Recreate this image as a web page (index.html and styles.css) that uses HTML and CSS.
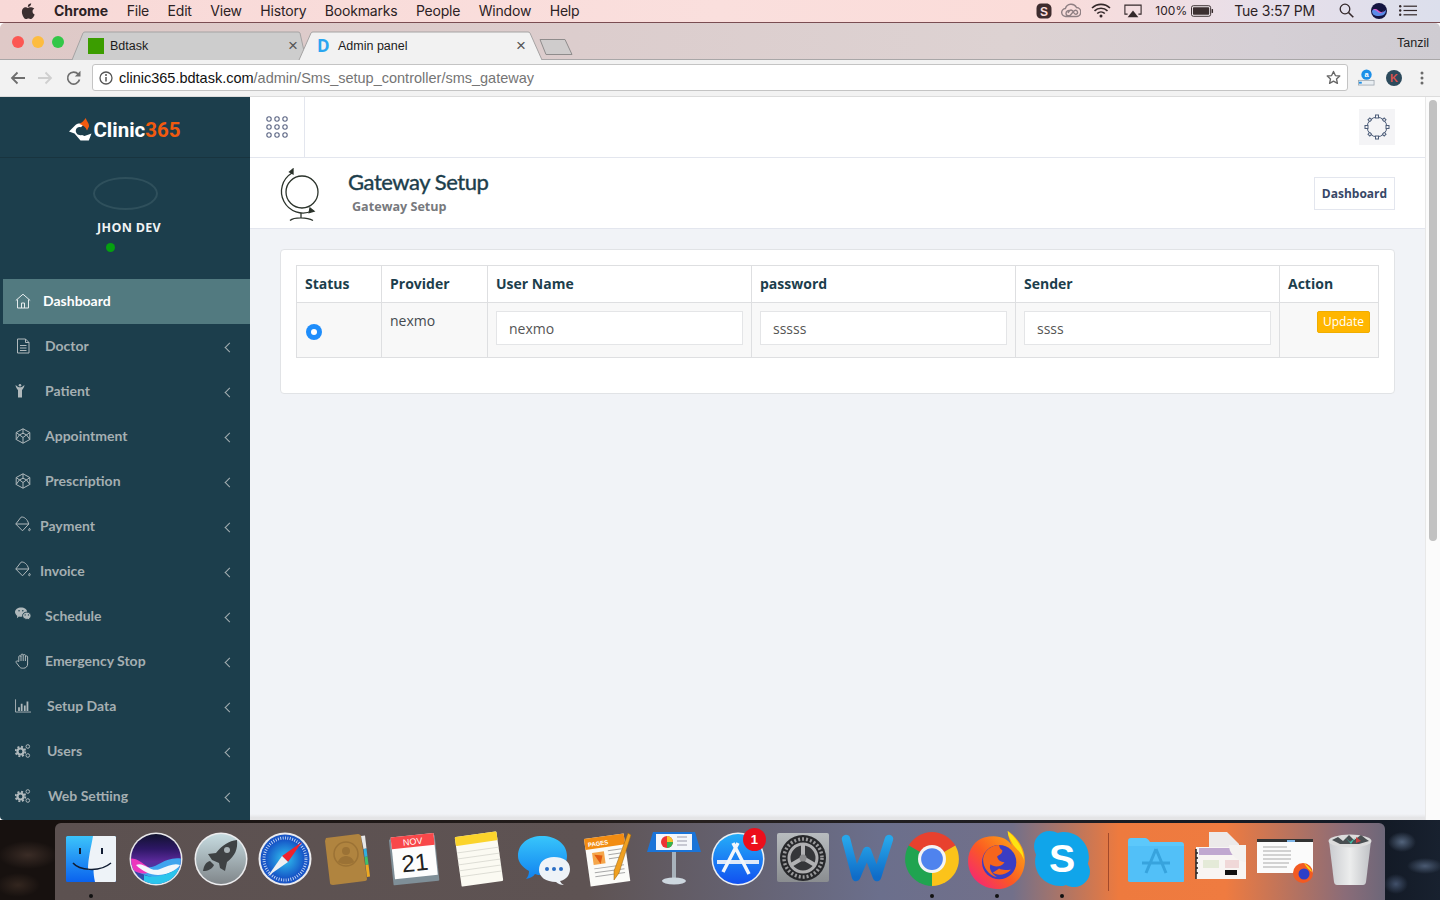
FILE: index.html
```html
<!DOCTYPE html>
<html lang="en">
<head>
<meta charset="utf-8">
<title>Admin panel</title>
<link rel="stylesheet" href="styles.css">
</head>
<body>
<div class="desktop">
  <header class="menubar">
    <svg class="apple" viewBox="0 0 16 18" width="14" height="16"><path d="M11.6 0c.1 1.2-.3 2.200-1 3-.7.8-1.700 1.400-2.800 1.300-.1-1.100.4-2.200 1-2.900C9.500.6 10.700.1 11.600 0zM15.200 6.200c-1.400.9-2 2-2 3.400 0 1.600.9 2.800 2.400 3.500-.4 1.100-.9 2.100-1.600 3.100-.8 1.100-1.600 2-2.700 2-1.100 0-1.500-.7-2.800-.7-1.300 0-1.800.7-2.800.7-1.100 0-1.900-1-2.700-2.200C1.800 14.200 1 11.900 1 9.800c0-3.200 2.100-5 4.100-5 1.100 0 2 .7 2.700.7.700 0 1.700-.8 3-.8 1.100 0 3.100.3 4.400 1.500z" fill="#3b2f30"/></svg>
    <nav class="menus">
      <span class="menu menu-app">Chrome</span>
      <span class="menu">File</span>
      <span class="menu">Edit</span>
      <span class="menu">View</span>
      <span class="menu">History</span>
      <span class="menu">Bookmarks</span>
      <span class="menu">People</span>
      <span class="menu">Window</span>
      <span class="menu">Help</span>
    </nav>
    <div class="status">
      <svg class="st-skype" viewBox="0 0 16 16" width="16" height="16"><path d="M5 .5h5.500C13.500.5 15.500 3 15.500 5.500v5.500c0 2.600-2.200 4.500-4.700 4.500H5C2.500 15.500.5 13.500.5 11V5C.5 2.500 2.500.5 5 .5z" fill="#3e2c2e"/><text x="8" y="12.500" class="st-skype-s">S</text></svg>
      <svg class="st-cc" viewBox="0 0 20 15" width="20" height="15"><path d="M5 13.500a4 4 0 0 1-.6-8A6 6 0 0 1 15.500 4.500 4.500 4.500 0 0 1 15 13.500zM7 10c2-4 4-4 6 0 1.500 2.500 4 1 3.500-1-.5-2-2.500-2.500-4-.5l-3 3.500c-2 1.500-4.500.5-4.500-1.500S7.500 6.500 9.500 8" fill="none" stroke="#8f7f83" stroke-width="1.400"/></svg>
      <svg class="st-wifi" viewBox="0 0 20 15" width="20" height="15"><g fill="none" stroke="#33282a" stroke-width="1.600"><path d="M1 5a13 13 0 0 1 18 0"/><path d="M3.500 7.800a9.500 9.500 0 0 1 13 0"/><path d="M6.200 10.500a5.500 5.500 0 0 1 7.600 0"/></g><circle cx="10" cy="13" r="1.500" fill="#33282a"/></svg>
      <svg class="st-air" viewBox="0 0 20 15" width="18" height="14"><path d="M4 11H1V1h18v10h-3" fill="none" stroke="#33282a" stroke-width="1.200"/><path d="M10 7l6 7.500H4z" fill="#33282a"/></svg>
      <span class="st-batt-text">100%</span>
      <svg class="st-batt" viewBox="0 0 24 12" width="23" height="12"><rect x=".5" y=".5" width="20" height="11" rx="2" fill="#fff" fill-opacity=".4" stroke="#33282a"/><rect x="2" y="2" width="17" height="8" rx=".8" fill="#3b2f30"/><rect x="21.500" y="4" width="1.500" height="4" fill="#33282a"/></svg>
      <span class="st-clock">Tue 3:57 PM</span>
      <svg class="st-search" viewBox="0 0 15 15" width="15" height="15"><circle cx="6" cy="6" r="4.800" fill="none" stroke="#33282a" stroke-width="1.300"/><path d="M9.500 9.500l4.800 4.800" stroke="#33282a" stroke-width="1.600"/></svg>
      <svg class="st-siri" viewBox="0 0 16 16" width="16" height="16"><circle cx="8" cy="8" r="8" fill="#141440"/><path d="M1 8c2-3 4-2 6 0s5 2 8-1c0 3-2 6-7 6S1 11 1 8z" fill="#5b8be8"/><path d="M2 7c2-2 4-1 6 1s4 1 5-1c-1 3-4 4-6 2S4 7 2 7z" fill="#e25ac8"/></svg>
      <svg class="st-list" viewBox="0 0 18 11" width="18" height="11"><g fill="#33282a"><circle cx="1.200" cy="1.200" r="1.200"/><circle cx="1.200" cy="5.500" r="1.200"/><circle cx="1.200" cy="9.800" r="1.200"/><rect x="4.500" y=".6" width="13.500" height="1.200"/><rect x="4.500" y="4.900" width="13.500" height="1.200"/><rect x="4.500" y="9.200" width="13.500" height="1.200"/></g></svg>
    </div>
  </header>

  <div class="window">
    <div class="tabstrip">
      <div class="lights"><i class="light light-r"></i><i class="light light-y"></i><i class="light light-g"></i></div>
      <div class="tab tab-back">
        <svg class="tabshape" viewBox="0 0 234 28" preserveAspectRatio="none"><path d="M0 28 L11 1 Q11.500 0 13 0 H226 Q227.500 0 228 1 L234 28" fill="#cdcdcd" stroke="#a5a3a3"/></svg>
        <i class="fav-green"></i>
        <span class="tab-title">Bdtask</span>
        <span class="tab-x">×</span>
      </div>
      <div class="tab tab-front">
        <svg class="tabshape" viewBox="0 0 243 28" preserveAspectRatio="none"><path d="M0 28 L12 1 Q12.500 0 14 0 H229 Q230.500 0 231 1 L243 28" fill="#f2f2f2" stroke="#a5a3a3"/></svg>
        <span class="fav-d">D</span>
        <span class="tab-title">Admin panel</span>
        <span class="tab-x">×</span>
      </div>
      <svg class="newtab" viewBox="0 0 34 18" width="34" height="18"><path d="M1 1.500H26L33 16.500H7z" fill="#cfcccc" stroke="#8f8c8c" stroke-linejoin="round"/></svg>
      <span class="profile">Tanzil</span>
    </div>

    <div class="toolbar">
      <svg class="tb-back" viewBox="0 0 16 14" width="16" height="14"><path d="M15 7H2M7.500 1.500L2 7l5.500 5.500" fill="none" stroke="#6e6e6e" stroke-width="1.800"/></svg>
      <svg class="tb-fwd" viewBox="0 0 16 14" width="16" height="14"><path d="M1 7h13M8.500 1.500L14 7l-5.500 5.500" fill="none" stroke="#cfcfcf" stroke-width="1.800"/></svg>
      <svg class="tb-reload" viewBox="0 0 16 16" width="16" height="16"><path d="M13.500 9.500a6 6 0 1 1-1.200-5.300" fill="none" stroke="#6e6e6e" stroke-width="1.700"/><path d="M14.500 .8V6.500H8.800z" fill="#6e6e6e"/></svg>
      <div class="omnibox">
        <svg class="info" viewBox="0 0 14 14" width="14" height="14"><circle cx="7" cy="7" r="6" fill="none" stroke="#555" stroke-width="1.300"/><path d="M7 6v4.500" stroke="#555" stroke-width="1.500"/><circle cx="7" cy="3.900" r="1" fill="#555"/></svg>
        <span class="url"><b class="url-host">clinic365.bdtask.com</b>/admin/Sms_setup_controller/sms_gateway</span>
        <svg class="star" viewBox="0 0 16 16" width="15" height="15"><path d="M8 1.500l2 4.400 4.700.5-3.500 3.200 1 4.700L8 11.900l-4.200 2.400 1-4.700L1.300 6.400 6 5.900z" fill="none" stroke="#666" stroke-width="1.400" stroke-linejoin="round"/></svg>
      </div>
      <svg class="ext-a" viewBox="0 0 18 18" width="17" height="17"><circle cx="9" cy="6" r="5.500" fill="#1b8fe8"/><text x="9" y="8.600" class="ext-a-t">a</text><rect x=".5" y="12" width="16.500" height="5" fill="#e9eef2" stroke="#9aa3ab" stroke-width=".8"/><rect x="1" y="13.500" width="3" height="2" fill="#1b8fe8"/></svg>
      <svg class="ext-k" viewBox="0 0 16 16" width="16" height="16"><circle cx="8" cy="8" r="8" fill="#2c4a5c"/><text x="8" y="12" class="ext-k-t">K</text></svg>
      <svg class="kebab" viewBox="0 0 4 14" width="4" height="14"><g fill="#6a6a6a"><circle cx="2" cy="2" r="1.500"/><circle cx="2" cy="7" r="1.500"/><circle cx="2" cy="12" r="1.500"/></g></svg>
    </div>

    <div class="app">
      <aside class="sidebar">
        <div class="logo">
          <svg class="logo-mark" viewBox="0 0 24 23" width="24" height="23"><path d="M0 13.500L6.500 7C9 5.200 12 5.200 14.500 6.500L12 9.300C9.500 8.300 7 10 6.800 12.500 6.600 15.500 9.500 18 13 17L15.500 18 22.500 15.500 19.800 22.500 11.500 22.500 5.500 15.500z" fill="#fff"/><path d="M10.500 6C13 4.500 15 2.500 16.800 0c.6 3 3.700 5.200 3.200 8.500L18 12.500C17 9.500 14 7 10.500 6z" fill="#f15a0f"/></svg>
          <span class="logo-text">Clinic<em class="logo-num">365</em></span>
        </div>
        <div class="user">
          <i class="avatar"></i>
          <span class="user-name">JHON DEV</span>
          <i class="user-dot"></i>
        </div>
        <nav class="nav">
          <a class="nav-item is-active">
            <svg class="nav-icon" viewBox="0 0 16 16"><path d="M.8 7.500L8 1.200l7.200 6.300M2.500 6.500V15h11V6.500M6.500 15v-5h3v5" class="ico-line"/></svg>
            <span class="nav-label lab-43">Dashboard</span>
          </a>
          <a class="nav-item">
            <svg class="nav-icon" viewBox="0 0 16 16"><path d="M2.500 1h8l3.500 3.500V15h-11.500zM10.500 1v3.500H14M5 7.500h6.500M5 10h6.500M5 12.500h6.500" class="ico-line"/></svg>
            <span class="nav-label lab-45">Doctor</span><i class="chev"></i>
          </a>
          <a class="nav-item">
            <svg class="nav-icon" viewBox="0 0 16 16"><path d="M.5 2c1.500 1 2.500 2 3.500 2.200h2C7 4 8 3 9.500 2c-.3 2.500-1.500 4-2.500 5v7.500H3V7C2 6 .8 4.500.5 2z" class="ico-fill"/><circle cx="5" cy="2.200" r="1.300" class="ico-fill"/></svg>
            <span class="nav-label lab-45">Patient</span><i class="chev"></i>
          </a>
          <a class="nav-item">
            <svg class="nav-icon" viewBox="0 0 16 16"><path d="M8 .8l6.800 3.700v7L8 15.200 1.200 11.500v-7zM8 .8v4.500M1.200 4.500L8 9.500l6.800-5M8 9.500v5.700M4.500 6.800L1.200 11.500M11.500 6.800l3.300 4.700M4.500 6.800L8 5.300l3.500 1.500" class="ico-line"/></svg>
            <span class="nav-label lab-45">Appointment</span><i class="chev"></i>
          </a>
          <a class="nav-item">
            <svg class="nav-icon" viewBox="0 0 16 16"><path d="M8 .8l6.800 3.700v7L8 15.200 1.200 11.500v-7zM8 .8v4.500M1.200 4.500L8 9.500l6.800-5M8 9.500v5.700M4.500 6.800L1.200 11.500M11.500 6.800l3.300 4.700M4.500 6.800L8 5.300l3.500 1.500" class="ico-line"/></svg>
            <span class="nav-label lab-45">Prescription</span><i class="chev"></i>
          </a>
          <a class="nav-item">
            <svg class="nav-icon nudge-up" viewBox="0 0 16 16"><path d="M.8 8L6 1.200c2-.8 5.500 1 7 4.800l.8 2L7.500 14.800zM.8 8H13.800M14.500 12.300c.8 1 1 1.500.4 2.200-.5.4-1.200.2-1.300-.4 0-.5.5-1 .9-1.800z" class="ico-line"/></svg>
            <span class="nav-label lab-40">Payment</span><i class="chev"></i>
          </a>
          <a class="nav-item">
            <svg class="nav-icon nudge-up" viewBox="0 0 16 16"><path d="M.8 8L6 1.200c2-.8 5.500 1 7 4.800l.8 2L7.500 14.800zM.8 8H13.800M14.500 12.300c.8 1 1 1.500.4 2.200-.5.4-1.200.2-1.300-.4 0-.5.5-1 .9-1.800z" class="ico-line"/></svg>
            <span class="nav-label lab-40">Invoice</span><i class="chev"></i>
          </a>
          <a class="nav-item">
            <svg class="nav-icon nudge-up" viewBox="0 0 17 15"><path d="M6.500 .5c3.500 0 6.500 2.200 6.500 5 0 2.800-3 5-6.500 5-.8 0-1.600-.1-2.300-.3L2 12l.4-2.500C1 8.500 0 7.100 0 5.500c0-2.800 3-5 6.500-5z" class="ico-fill"/><path d="M12.500 5.500c2.500 0 4.500 1.700 4.500 3.800 0 1.200-.6 2.200-1.600 2.900l.3 2-1.900-1.100c-.4.100-.9.100-1.300.1-2.500 0-4.500-1.700-4.500-3.900s2-3.800 4.500-3.800z" class="ico-fill ico-gap"/><circle cx="4.300" cy="4" r=".8" class="ico-eye"/><circle cx="8.300" cy="4" r=".8" class="ico-eye"/><circle cx="10.800" cy="8.500" r=".7" class="ico-eye"/><circle cx="14.300" cy="8.500" r=".7" class="ico-eye"/></svg>
            <span class="nav-label lab-45">Schedule</span><i class="chev"></i>
          </a>
          <a class="nav-item">
            <svg class="nav-icon" viewBox="0 0 16 16"><path d="M3.800 8.500V3.800a1.100 1.100 0 0 1 2.200 0V2.200a1.100 1.100 0 0 1 2.200 0V2.600a1.100 1.100 0 0 1 2.200 0V4a1.100 1.100 0 0 1 2.200 0v7c0 2.500-1.800 4.200-4 4.200H7.500c-1.800 0-2.700-.8-3.500-2L1.200 9.500c-.7-1.200.9-2.200 1.700-1.300zM6 3.800V8M8.200 2.600V8M10.400 4V8" class="ico-line"/></svg>
            <span class="nav-label lab-45">Emergency Stop</span><i class="chev"></i>
          </a>
          <a class="nav-item">
            <svg class="nav-icon" viewBox="0 0 18 15"><path d="M.6 0v14.300H18" class="ico-line"/><path d="M3.500 9h2v4h-2zM6.500 5h2v8h-2zM10 7h2v6h-2zM13 2.500h2V13h-2z" class="ico-fill"/></svg>
            <span class="nav-label lab-47">Setup Data</span><i class="chev"></i>
          </a>
          <a class="nav-item">
            <svg class="nav-icon" viewBox="0 0 16 15"><circle cx="5.500" cy="8" r="3" class="ico-ring"/><circle cx="5.500" cy="8" r="4.800" class="ico-teeth"/><circle cx="12.800" cy="3" r="1.800" class="ico-line"/><circle cx="12.800" cy="12" r="1.800" class="ico-line"/></svg>
            <span class="nav-label lab-47">Users</span><i class="chev"></i>
          </a>
          <a class="nav-item">
            <svg class="nav-icon" viewBox="0 0 16 15"><circle cx="5.500" cy="8" r="3" class="ico-ring"/><circle cx="5.500" cy="8" r="4.800" class="ico-teeth"/><circle cx="12.800" cy="3" r="1.800" class="ico-line"/><circle cx="12.800" cy="12" r="1.800" class="ico-line"/></svg>
            <span class="nav-label lab-48">Web Settiing</span><i class="chev"></i>
          </a>
        </nav>
      </aside>

      <main class="main">
        <div class="topbar">
          <button class="grid-btn">
            <svg viewBox="0 0 22 22" width="22" height="22"><g fill="none" stroke="#5d6785" stroke-width="1.100"><circle cx="3" cy="3" r="2.200"/><circle cx="11" cy="3" r="2.200"/><circle cx="19" cy="3" r="2.200"/><circle cx="3" cy="11" r="2.200"/><circle cx="11" cy="11" r="2.200"/><circle cx="19" cy="11" r="2.200"/><circle cx="3" cy="19" r="2.200"/><circle cx="11" cy="19" r="2.200"/><circle cx="19" cy="19" r="2.200"/></g></svg>
          </button>
          <button class="gear-btn">
            <svg viewBox="0 0 26 26" width="26" height="26"><g fill="#f4f4f6" stroke="#4c5c78" stroke-width="1"><circle cx="13" cy="13" r="9.800"/><rect x="11.500" y="1" width="3" height="3"/><rect x="11.500" y="22" width="3" height="3"/><rect x="1" y="11.500" width="3" height="3"/><rect x="22" y="11.500" width="3" height="3"/><rect x="4.500" y="4.500" width="2.600" height="2.600" transform="rotate(45 5.800 5.800)"/><rect x="18.900" y="4.500" width="2.600" height="2.600" transform="rotate(45 20.200 5.800)"/><rect x="4.500" y="18.900" width="2.600" height="2.600" transform="rotate(45 5.800 20.200)"/><rect x="18.900" y="18.900" width="2.600" height="2.600" transform="rotate(45 20.200 20.200)"/></g></svg>
          </button>
        </div>
        <section class="pagehead">
          <svg class="globe" viewBox="0 0 44 54" width="44" height="54"><g fill="none" stroke="#2b332b" stroke-width="1.300"><circle cx="25" cy="24" r="16"/><path d="M15 5A21.500 21.500 0 0 0 35 43"/><path d="M24 45v5M13 52.500c4-3.500 17-3.500 23 0"/><path d="M12.500 4l3.500-3 0 5zM33 40l4 3.200-4.800 1.300z" fill="#2b332b"/></g></svg>
          <div class="pagehead-text">
            <h1 class="page-title">Gateway Setup</h1>
            <p class="page-sub">Gateway Setup</p>
          </div>
          <a class="crumb">Dashboard</a>
        </section>
        <section class="content">
          <div class="card">
            <table class="gateway">
              <thead>
                <tr>
                  <th class="col-status">Status</th>
                  <th class="col-provider">Provider</th>
                  <th class="col-field">User Name</th>
                  <th class="col-field">password</th>
                  <th class="col-field">Sender</th>
                  <th class="col-action">Action</th>
                </tr>
              </thead>
              <tbody>
                <tr>
                  <td class="cell-radio"><i class="radio"></i></td>
                  <td>nexmo</td>
                  <td><input class="field" value="nexmo"></td>
                  <td><input class="field" value="sssss"></td>
                  <td><input class="field" value="ssss"></td>
                  <td class="cell-action"><button class="update">Update</button></td>
                </tr>
              </tbody>
            </table>
          </div>
        </section>
        <i class="dock-shade"></i>
      </main>
      <div class="scrollbar"><i class="thumb"></i></div>
    </div>
  </div>

  <footer class="dock">
    <div class="dock-group">
      <div class="dock-cell"><svg viewBox="0 0 56 56" width="56" height="56"><defs><linearGradient id="fb" x1="0" y1="0" x2="0" y2="1"><stop offset="0" stop-color="#3cc4fb"/><stop offset="1" stop-color="#0a62ee"/></linearGradient></defs><rect x="3" y="5" width="50" height="46" rx="1.500" fill="url(#fb)"/><path d="M30 5h21.500a1.500 1.500 0 0 1 1.500 1.500v43a1.500 1.500 0 0 1-1.500 1.500H32c-1-4-1.500-9-1.500-12H25c0-12 3-22 5-34z" fill="#eef3f8"/><path d="M10 32c6 7 26 10 38 0" fill="none" stroke="#111d33" stroke-width="1.500"/><path d="M17 17v6M39 17v6" stroke="#111d33" stroke-width="2"/></svg><i class="dot"></i></div>
      <div class="dock-cell"><svg viewBox="0 0 56 56" width="56" height="56"><defs><linearGradient id="sb" x1="0" y1="0" x2="0" y2="1"><stop offset="0" stop-color="#11132f"/><stop offset=".3" stop-color="#2e1766"/><stop offset=".55" stop-color="#5c2a9c"/><stop offset="1" stop-color="#1d5fb0"/></linearGradient><clipPath id="sc"><circle cx="28" cy="28" r="25"/></clipPath></defs><circle cx="28" cy="28" r="26.500" fill="#e8e8ea"/><circle cx="28" cy="28" r="25" fill="url(#sb)"/><g clip-path="url(#sc)"><path d="M0 30c8-4 12 4 20 6 10 2 16-12 36-8v12c-14-2-22 8-32 6S6 38 0 40z" fill="#3fa4ee"/><path d="M0 28c8-2 14 4 20 8s0 8-8 6-12-6-12-14z" fill="#ec36bd"/><path d="M8 34c8-4 14 8 24 4 8-3 14-6 20-4-4 6-14 10-22 10s-16-4-22-10z" fill="#f2f7fb"/><path d="M16 44c10 4 22 0 34-6v18H16z" fill="#2bc5ec"/></g></svg></div>
      <div class="dock-cell"><svg viewBox="0 0 56 56" width="56" height="56"><defs><linearGradient id="lb" x1="0" y1="0" x2="0" y2="1"><stop offset="0" stop-color="#c6dbe0"/><stop offset="1" stop-color="#80868a"/></linearGradient></defs><circle cx="28" cy="28" r="26.500" fill="#ececee"/><circle cx="28" cy="28" r="25" fill="url(#lb)"/><path d="M44 9c1 9-2 16-10 22l-2 9-5-3-1-5-7-3-4-6 8-1c6-8 13-12 21-13z" fill="#3e4244"/><circle cx="34" cy="19" r="3" fill="#a8b2b6"/><path d="M17 30c-4 1-6 4-7 10 5 0 9-2 11-6z" fill="#3e4244"/></svg></div>
      <div class="dock-cell"><svg viewBox="0 0 56 56" width="56" height="56"><defs><radialGradient id="saf"><stop offset="0" stop-color="#31c3f0"/><stop offset="1" stop-color="#1658c8"/></radialGradient></defs><circle cx="28" cy="28" r="26.500" fill="#ececee"/><circle cx="28" cy="28" r="24.500" fill="#1a56c6"/><circle cx="28" cy="28" r="21" fill="none" stroke="#d5e6fa" stroke-width="3" stroke-dasharray=".8 1.600"/><circle cx="28" cy="28" r="19" fill="url(#saf)"/><path d="M45 11L25 25l6 6z" fill="#f0222c"/><path d="M11 45l14-20 6 6z" fill="#eef0f2"/></svg></div>
      <div class="dock-cell"><svg viewBox="0 0 56 56" width="56" height="56"><path d="M4 7l32-4c1.500 0 2.500 1 3 2l6 43c0 1-1 2-2 2l-32 4c-2 0-3-1-3-2L3 10z" fill="#b0843f"/><path d="M39 5l4-.5 1.500 13-3 .5z" fill="#e7e7e7"/><path d="M41.500 18l3-.5 1 8-3 .5z" fill="#31aee0"/><path d="M42.500 26l3-.5 1 8-3 .5z" fill="#3fc16c"/><path d="M43.500 34l3-.5 1.500 12-3 .5z" fill="#eeaa22"/><circle cx="24" cy="23" r="12" fill="none" stroke="#9b7235" stroke-width="1.500"/><circle cx="24" cy="20" r="4" fill="#9b7235"/><path d="M16 31c1-4 5-6 8-6s7 2 8 6c-4 3-12 3-16 0z" fill="#9b7235"/></svg></div>
      <div class="dock-cell"><svg viewBox="0 0 56 56" width="56" height="56"><g transform="rotate(-6 28 28)"><rect x="4" y="6" width="46" height="46" rx="1" fill="#7f8f98"/><rect x="6" y="4" width="43" height="42" fill="#fdfdfd"/><rect x="6" y="4" width="43" height="12" fill="#f8484a"/><text x="27.500" y="13.500" class="cal-m">NOV</text><text x="27.500" y="40" class="cal-d">21</text></g></svg></div>
      <div class="dock-cell"><svg viewBox="0 0 56 56" width="56" height="56"><g transform="rotate(-8 28 28)"><rect x="7" y="3" width="42" height="50" rx="1" fill="#fbfaf2"/><rect x="7" y="3" width="42" height="9" rx="1" fill="#fbd42c"/><path d="M7 19h42M7 25h42M7 31h42M7 37h42M7 43h42" stroke="#d8d8d0" stroke-width=".8"/></g></svg></div>
      <div class="dock-cell"><svg viewBox="0 0 56 56" width="56" height="56"><defs><linearGradient id="mb" x1="0" y1="0" x2="0" y2="1"><stop offset="0" stop-color="#38c6fb"/><stop offset="1" stop-color="#1182f0"/></linearGradient></defs><path d="M26 5c14 0 25 8 25 20 0 12-11 19-25 19-3 0-5 0-7-1-2 3-5 4-9 5 2-2 3-5 3-8C6 36 2 31 2 25 2 13 12 5 26 5z" fill="url(#mb)"/><path d="M38 26c9 0 16 4 16 12 0 6-4 11-10 12 1 2 2 3 4 4-3 0-6-1-8-3-10 0-17-5-17-12 0-8 6-13 15-13z" fill="#eef3f8"/><g fill="#2a6ec4"><circle cx="31" cy="38" r="2"/><circle cx="38" cy="38" r="2"/><circle cx="45" cy="38" r="2"/></g></svg></div>
      <div class="dock-cell"><svg viewBox="0 0 56 56" width="56" height="56"><g transform="rotate(-8 26 28)"><rect x="6" y="5" width="40" height="48" fill="#fbfbf8"/><rect x="6" y="5" width="40" height="11" fill="#f28c12"/><text x="9" y="13.500" class="pg-t">PAGES</text><path d="M12 20h12v12H12z" fill="#f5a64a"/><path d="M14 22l8 2-3 8z" fill="#e25b10"/><path d="M28 20h14M28 24h14M28 28h14M12 36h30M12 40h30M12 44h30" stroke="#a8a8a8"/></g><path d="M47 2l3 2-12 38-5 7 0-9z" fill="#f0a020" stroke="#915e10" stroke-width=".5"/></svg></div>
      <div class="dock-cell"><svg viewBox="0 0 56 56" width="56" height="56"><path d="M7 1h42l6 20H1z" fill="#1a74d8"/><rect x="10" y="3" width="36" height="16" fill="#f4f6fa"/><circle cx="21" cy="11" r="6" fill="#e33"/><path d="M21 11V5a6 6 0 0 1 6 6z" fill="#f7c32a"/><path d="M21 11h6a6 6 0 0 1-6 6z" fill="#35b550"/><path d="M31 6h10M31 10h10M31 14h10" stroke="#99a" stroke-width="1.200"/><rect x="26" y="21" width="4" height="27" fill="#a8b2bb"/><ellipse cx="28" cy="50" rx="12" ry="3.500" fill="#cdd7df"/></svg></div>
      <div class="dock-cell"><svg viewBox="0 0 56 56" width="56" height="56"><defs><linearGradient id="ab" x1="0" y1="0" x2="0" y2="1"><stop offset="0" stop-color="#25aef8"/><stop offset="1" stop-color="#1150f0"/></linearGradient></defs><circle cx="28" cy="28" r="26.500" fill="#eceff2"/><circle cx="28" cy="28" r="25" fill="url(#ab)"/><path d="M7 31h42" stroke="#dfe9f8" stroke-width="4"/><path d="M28 12L13 41M23 12l16 31" stroke="#f2f6fb" stroke-width="3.500" fill="none"/></svg><span class="badge">1</span></div>
      <div class="dock-cell"><svg viewBox="0 0 56 56" width="56" height="56"><defs><linearGradient id="pb" x1="0" y1="0" x2="0" y2="1"><stop offset="0" stop-color="#b8bcbf"/><stop offset="1" stop-color="#8a8d90"/></linearGradient></defs><rect x="2" y="2" width="52" height="49" rx="2" fill="url(#pb)"/><circle cx="28" cy="27" r="23" fill="#27282b"/><circle cx="28" cy="27" r="19" fill="none" stroke="#9a9a9c" stroke-width="3.500" stroke-dasharray="2 2"/><circle cx="28" cy="27" r="15" fill="#353639"/><circle cx="28" cy="27" r="14" fill="none" stroke="#aeaeb0" stroke-width="3"/><path d="M28 27V13M28 27L16 34M28 27l12 7" stroke="#b2b2b4" stroke-width="4"/><circle cx="28" cy="27" r="3.500" fill="#8a8a8c"/></svg></div>
      <div class="dock-cell"><svg viewBox="0 0 56 56" width="56" height="56"><defs><linearGradient id="wb" x1="0" y1="0" x2="0" y2="1"><stop offset="0" stop-color="#27a6ea"/><stop offset="1" stop-color="#0f6cc8"/></linearGradient></defs><path d="M6 8l10 38 11-26 10 26 12-38" fill="none" stroke="url(#wb)" stroke-width="8.500" stroke-linejoin="round" stroke-linecap="round"/></svg></div>
      <div class="dock-cell"><svg class="icon-lg" viewBox="0 0 56 56" width="58" height="58"><path d="M28 28L5.500 15A26 26 0 0 1 50.500 15z" fill="#e8412e"/><path d="M28 28L50.500 15A26 26 0 0 1 28 54z" fill="#fbc31a"/><path d="M28 28L28 54A26 26 0 0 1 5.500 15z" fill="#20a450"/><circle cx="28" cy="28" r="13.500" fill="#f4f4f4"/><circle cx="28" cy="28" r="10.500" fill="#4f83ee"/></svg><i class="dot"></i></div>
      <div class="dock-cell"><svg class="icon-lg" viewBox="0 0 56 56" width="60" height="60"><defs><linearGradient id="ffb" x1="0" y1="1" x2="1" y2="0"><stop offset="0" stop-color="#f4198a"/><stop offset=".45" stop-color="#fb5a22"/><stop offset="1" stop-color="#fcbf12"/></linearGradient></defs><path d="M38 1c8 5 17 16 16 29-1 15-12 25-26 25C14 55 1 45 1 29 1 18 8 9 16 7c12-3 22 0 26 8-2-5-4-9-4-14z" fill="url(#ffb)"/><circle cx="30" cy="30" r="16" fill="#3a3dc4"/><path d="M30 14c-7 0-14 5-15 13 0 8 5 15 13 17-5-3-8-8-6-12 3 3 10 3 13-2-5 0-6-3-7-5 2-2 5-2 5-6-2-1-3-3-3-5z" fill="#f6651c"/><path d="M24 40c5 3 12 2 17-3-3 0-8 1-11-1z" fill="#f6651c"/><path d="M38 1c7 6 15 15 15 27-2-8-8-10-11-16-2-4-4-7-4-11z" fill="#fde412"/></svg><i class="dot"></i></div>
      <div class="dock-cell"><svg class="icon-lg" viewBox="0 0 56 56" width="58" height="58"><path d="M16 1C7 1 1 8 1 16c0 3 1 6 2 8-.5 2-1 4-1 6 0 14 11 24 24 24 2 0 4 0 6-1 2 1.500 5 2 8 2 8 0 15-7 15-15 0-3-1-5-2-7.500.5-2 1-4 1-6C54 13 43 2 30 2c-2 0-4 0-6 1-2.500-1.300-5-2-8-2z" fill="#10a5ea"/><text x="28" y="41" class="sk-s">S</text></svg><i class="dot"></i></div>
    </div>
    <i class="dock-div"></i>
    <div class="dock-group">
      <div class="dock-cell"><svg viewBox="0 0 60 56" width="60" height="56"><path d="M2 10c0-2 1-3 3-3h14c2 0 3 1 5 4h31c2 0 3 1 3 3v35c0 2-1 2-3 2H5c-2 0-3-1-3-2z" fill="#5cc8fb"/><path d="M2 15h56v34c0 2-1 2-3 2H5c-2 0-3-1-3-2z" fill="#52c0f8"/><path d="M30 18L20 42M30 18l10 24M16 32h28" stroke="#37a3dd" stroke-width="3" fill="none"/></svg></div>
      <div class="dock-cell"><svg viewBox="0 0 56 56" width="56" height="56"><path d="M16 1h18l12 12v18H16z" fill="#eceaea"/><rect x="3" y="16" width="50" height="32" fill="#f8f5f3"/><rect x="6" y="17" width="42" height="7" fill="#c0a8d0"/><path d="M10 29h16v8H10z" fill="#e4ead8"/><path d="M32 29h14v8H32z" fill="#f0d8d8"/><rect x="32" y="39" width="12" height="5" fill="#111"/><path d="M3 18v30M3 22h2M3 27h2M3 32h2M3 37h2M3 42h2" stroke="#222" stroke-width="1.500"/><path d="M36 14h17v17c-6 0-17-6-17-17z" fill="#f4f2f0"/></svg></div>
      <div class="dock-cell"><svg viewBox="0 0 60 56" width="60" height="56"><rect x="2" y="10" width="56" height="32" fill="#fbfbfb"/><rect x="2" y="8" width="56" height="3" fill="#333"/><rect x="32" y="9" width="8" height="2" fill="#7fb6e8"/><path d="M8 16h24M8 20h28M8 24h28M8 28h28M8 32h26M8 36h24" stroke="#a9a9a9" stroke-width="1"/><circle cx="48" cy="42" r="10" fill="#f25a22"/><circle cx="49" cy="43" r="5.500" fill="#2d3fc8"/><path d="M49 32c3 2 7 5 8 9-3-2-5-4-8-9z" fill="#fdd912"/></svg></div>
      <div class="dock-cell"><svg viewBox="0 0 56 56" width="56" height="56"><defs><linearGradient id="tb" x1="0" y1="0" x2="1" y2="0"><stop offset="0" stop-color="#c9cbcf"/><stop offset=".5" stop-color="#eceded"/><stop offset="1" stop-color="#bfc1c5"/></linearGradient></defs><path d="M7 10h42l-5 41c-.3 2-1.500 3-3 3H15c-1.500 0-2.700-1-3-3z" fill="url(#tb)"/><ellipse cx="28" cy="10" rx="21.500" ry="6.500" fill="#dcdcdc"/><path d="M10 9l6-3 5 4 6-6 5 5 7-5 5 4 3 2-10 3H18z" fill="#4a4f52"/><path d="M23 6l5 5 5-4-4 6z" fill="#3fc0a8"/><path d="M34 6l5 4-5 2z" fill="#c43f3f"/></svg></div>
    </div>
  </footer>
</div>
</body>
</html>
```
FILE: styles.css
```css
* { box-sizing: border-box; }
html, body { margin: 0; height: 100%; overflow: hidden; }
body { font-family: "Open Sans", sans-serif; }
i, em { font-style: normal; }
button { font: inherit; cursor: pointer; }

.desktop {
  width: 1440px; height: 900px; overflow: hidden;
  display: flex; flex-direction: column;
  background:
    radial-gradient(30px 14px at 28px 855px, #3a2c26, transparent),
    radial-gradient(22px 12px at 18px 885px, #33261f, transparent),
    radial-gradient(14px 10px at 1402px 842px, #53647c, transparent),
    radial-gradient(18px 8px at 1425px 866px, #4a5a72, transparent),
    radial-gradient(12px 10px at 1396px 884px, #41506a, transparent),
    linear-gradient(90deg, #17110f 0, #17110f 55px, #26201f 700px, #131a26 1385px, #18212f 1440px);
}

/* menu bar */
.menubar {
  flex: none; height: 23px; display: flex; align-items: center;
  padding: 0 23px 1px 21px;
  background: linear-gradient(90deg, #f8d9d7 0, #fadfdd 50%, #fbdcd9 72%, #e7dfea 88%, #dcdfec 100%);
  border-bottom: 1px solid #7a4d52;
  font: 14px/20px Inter, "Liberation Sans", sans-serif;
  color: #2c2224;
}
.apple { flex: none; }
.menus { display: flex; margin-left: 19px; gap: 18.5px; letter-spacing: -.2px; }
.menu { white-space: nowrap; }
.menu-app { font-weight: 700; letter-spacing: 0; }
.status { margin-left: auto; display: flex; align-items: center; }
.st-skype { margin-right: 9px; }
.st-skype-s { font: 700 12px "Liberation Sans", sans-serif; fill: #fbdedc; text-anchor: middle; }
.st-cc { margin-right: 10px; }
.st-wifi { margin-right: 13px; }
.st-air { margin-right: 13px; }
.st-batt-text { font-size: 12px; margin-right: 4px; }
.st-batt { margin-right: 20px; }
.st-clock { margin-right: 24px; white-space: nowrap; letter-spacing: -.2px; }
.st-search { margin-right: 17px; }
.st-siri { margin-right: 12px; }

/* window */
.window {
  flex: none; height: 797px; display: flex; flex-direction: column;
  overflow: hidden; background: #fff;
}
.tabstrip {
  flex: none; height: 37px; position: relative; display: flex; align-items: flex-end;
  padding-left: 72px;
  background: linear-gradient(90deg, #dfc9c7 0, #dccdcd 40%, #ddd2d2 70%, #d5cfd5 88%, #cfccd2 100%);
  border-bottom: 1px solid #a9a7a8;
  border-radius: 5px 5px 0 0;
  font: 12.5px/16px "Liberation Sans", sans-serif;
  color: #1c1c1c;
}
.lights { position: absolute; left: 12px; top: 13px; display: flex; gap: 8px; }
.light { width: 12px; height: 12px; border-radius: 50%; }
.light-r { background: #fc5753; }
.light-y { background: #fdbc40; }
.light-g { background: #33c748; }
.tab {
  position: relative; height: 28px; flex: none; display: flex; align-items: center;
  margin-bottom: -1px;
}
.tabshape { position: absolute; inset: 0; width: 100%; height: 100%; overflow: visible; }
.tab > *:not(.tabshape) { position: relative; }
.tab-back { width: 234px; padding-left: 16px; }
.tab-front { width: 243px; padding-left: 18px; margin-left: -7px; }
.fav-green { width: 16px; height: 16px; background: #3b9d00; margin-right: 6px; }
.fav-d { width: 21px; font: 700 17px/16px "Open Sans", sans-serif; color: #2aa6f0; }
.tab-title { flex: 1; }
.tab-x { font: 17px/16px "Liberation Sans", sans-serif; color: #555; margin-right: 8px; }
.tab-front .tab-x { margin-right: 16px; }
.newtab { flex: none; margin: 0 0 3px -3px; }
.profile { position: absolute; right: 11px; top: 12px; color: #222; font-size: 12.5px; }

.toolbar {
  flex: none; height: 37px; display: flex; align-items: center;
  padding: 0 16px 1px 10px;
  background: #f2f2f2;
  border-bottom: 1px solid #dcdcdc;
}
.tb-back { margin-right: 11px; flex: none; }
.tb-fwd { margin-right: 13px; flex: none; }
.tb-reload { margin-right: 10px; flex: none; }
.omnibox {
  flex: none; width: 1256px; height: 27px; display: flex; align-items: center;
  padding: 0 6px 0 6px;
  background: #fff; border: 1px solid #c4c4c4; border-radius: 3px;
}
.url { margin-left: 6px; font: 14.5px/18px "Liberation Sans", sans-serif; color: #757575; white-space: nowrap; }
.url-host { font-weight: 400; color: #111; }
.star { margin-left: auto; }
.ext-a { margin-left: 10px; flex: none; }
.ext-a-t { font: 700 8px "Liberation Sans", sans-serif; fill: #fff; text-anchor: middle; }
.ext-k { margin-left: 11px; flex: none; }
.ext-k-t { font: 700 11px "Liberation Sans", sans-serif; fill: #d9534f; text-anchor: middle; }
.kebab { margin-left: 18px; flex: none; }

.app { flex: 1; min-height: 0; display: flex; }

/* sidebar */
.sidebar {
  flex: none; width: 250px; background: #1c3e4c; display: flex; flex-direction: column;
  border-bottom-left-radius: 4px;
}
.logo {
  flex: none; height: 61px; display: flex; align-items: center; justify-content: center;
  padding: 5px 0 0;
  border-bottom: 1px solid #18343f;
}
.logo-mark { margin-top: -1px; }
.logo-text { font: 700 20.5px/24px Roboto, "Liberation Sans", sans-serif; color: #fff; }
.logo-num { color: #f15a0f; }
.user {
  flex: none; height: 121px; display: flex; flex-direction: column; align-items: center;
  position: relative; padding-top: 19px;
}
.avatar { width: 65px; height: 33px; border-radius: 50%; border: 2px solid #2f505c; }
.user-name { margin-top: 9px; font: 700 12.5px/18px "Open Sans", sans-serif; color: #f0f3f4; letter-spacing: .3px; margin-left: 8px; }
.user-dot { width: 9px; height: 9px; border-radius: 50%; background: #05a010; margin: 6px 29px 0 0; }
.nav { flex: 1; display: flex; flex-direction: column; padding-left: 3px; }
.nav-item {
  flex: none; height: 45px; display: flex; align-items: center; padding: 0 0 2px 12px;
  font: 700 14px/20px Lato, "Liberation Sans", sans-serif; color: #a5afb2;
  position: relative;
}
.nav-item.is-active { background: #527a80; color: #fff; }
.nav-icon { flex: none; width: 16px; height: 16px; fill: none; }
.nudge-up { margin-top: -4px; }
.ico-line { fill: none; stroke: #b0b9bc; stroke-width: 1; }
.is-active .ico-line { stroke: #e6eced; }
.ico-fill { fill: #b0b9bc; }
.ico-gap { stroke: #1c3e4c; stroke-width: 1; }
.ico-eye { fill: #1c3e4c; }
.ico-ring { fill: none; stroke: #b0b9bc; stroke-width: 2.2; }
.ico-teeth { fill: none; stroke: #b0b9bc; stroke-width: 1.8; stroke-dasharray: 2 1.770; }
.lab-40 { margin-left: 9px; }
.lab-43 { margin-left: 12px; }
.lab-45 { margin-left: 14px; }
.lab-47 { margin-left: 16px; }
.lab-48 { margin-left: 17px; }
.chev {
  position: absolute; left: 223px; top: 20px; width: 7px; height: 7px;
  border-left: 1px solid #a5afb2; border-bottom: 1px solid #a5afb2;
  transform: rotate(45deg);
}

/* main */
.main { flex: 1; min-width: 0; display: flex; flex-direction: column; background: #f1f3f7; position: relative; }
.topbar {
  flex: none; height: 61px; display: flex; align-items: center; justify-content: space-between;
  background: #fff; border-bottom: 1px solid #e3e6ee; padding-right: 30px;
}
.grid-btn {
  width: 55px; height: 60px; padding: 0; background: #fff; border: 0; border-right: 1px solid #e3e6ee;
  display: flex; align-items: center; justify-content: center;
}
.gear-btn {
  width: 36px; height: 36px; padding: 0; background: #f4f4f6; border: 0;
  display: flex; align-items: center; justify-content: center;
}
.pagehead {
  flex: none; height: 71px; display: flex; align-items: flex-start; padding: 9px 30px 0 27px;
  background: #fff; border-bottom: 1px solid #e3e6ee;
}
.globe { flex: none; margin-top: 1px; }
.pagehead-text { margin-left: 27px; }
.page-title { margin: 1px 0 0; font: 400 22px/28px Lato, sans-serif; color: #1c3e4c; -webkit-text-stroke: .4px #1c3e4c; letter-spacing: -.45px; }
.page-sub { margin: 2px 0 0 4px; font: 700 12.6px/18px "Open Sans", sans-serif; color: #77797d; }
.crumb {
  margin: 10px 0 0 auto; width: 81px; height: 33px; display: flex; align-items: center; justify-content: center;
  border: 1px solid #e3e6ee; font: 700 12px/16px "Open Sans", sans-serif; color: #374767;
}
.content { flex: 1; min-height: 0; padding: 20px 30px 0; }
.card {
  background: #fff; border: 1px solid #e1e3e6; border-radius: 4px;
  height: 145px; padding: 15px;
}
.gateway { width: 1083px; border-collapse: collapse; table-layout: fixed; font-size: 14px; line-height: 20px; color: #444a4f; }
.gateway th, .gateway td { border: 1px solid #dedfe1; padding: 8px; text-align: left; vertical-align: top; }
.gateway th { height: 37px; font-weight: 700; color: #1c3e4c; padding: 8px; }
.gateway td { height: 55px; background: #f8f8f8; }
.col-status { width: 85px; }
.col-provider { width: 106px; }
.col-field { width: 264px; }
.col-action { width: 99px; }
.cell-radio { padding-top: 13px !important; }
.radio {
  display: block; width: 16px; height: 16px; margin: 8px 0 0 1px; border-radius: 50%;
  background: #1e8dfb; position: relative;
}
.radio::after { content: ""; position: absolute; left: 5px; top: 5px; width: 6px; height: 6px; border-radius: 50%; background: #fff; }
.field {
  display: block; width: 247px; height: 34px; padding: 0 12px; border: 1px solid #e4e5e7; border-radius: 0;
  background: #fff; color: #555; font: 14px/20px "Open Sans", sans-serif; outline: 0;
}
.cell-action { text-align: right !important; }
.update {
  height: 22px; width: 53px; padding: 0; border: 1px solid #f0ad00; border-radius: 2px;
  background: #ffb600; color: #fff; font: 12px/18px "Open Sans", sans-serif;
}
.dock-shade {
  position: absolute; left: 0; right: 0; bottom: 0; height: 6px;
  background: linear-gradient(180deg, rgba(225,225,228,0), #e4e4e6 60%);
}
.scrollbar { flex: none; width: 15px; background: #fbfbfb; border-left: 1px solid #e8e8e8; padding: 3px 3px 0; }
.thumb { display: block; width: 8px; height: 441px; border-radius: 4px; background: #c1c1c1; }

/* dock */
.dock {
  flex: none; width: 1330px; height: 77px; margin: 3px 0 0 55px; padding: 8px 0 0 4px;
  display: flex; align-items: flex-start;
  border-radius: 6px 6px 0 0;
  background: linear-gradient(90deg, #5c5150 0, #5e5353 40%, #6b6f8c 62%, #72708a 72%, #ee7a3e 80%, #ef7b40 88%, #8a6c78 97%, #6d6779 100%);
}
.dock-group { display: flex; flex: none; }
.dock-cell { position: relative; width: 64.7px; height: 69px; display: flex; justify-content: center; }
.dock-cell svg { display: block; flex: none; }
.dock-cell .icon-lg { margin-top: -1px; }
.dot { position: absolute; left: 50%; bottom: 2px; width: 4px; height: 4px; margin-left: -2px; border-radius: 50%; background: #111; }
.dock-div { flex: none; width: 1px; height: 58px; margin: 2px 15px 0 13.500px; background: #a2492a; }
.badge {
  position: absolute; left: 37px; top: -3px; width: 23px; height: 23px; border-radius: 50%;
  background: #ec0f1c; color: #fff; font: 700 13px/23px "Liberation Sans", sans-serif; text-align: center;
}
.cal-m { font: 9px "Liberation Sans", sans-serif; fill: #fff; text-anchor: middle; }
.cal-d { font: 24px "Liberation Sans", sans-serif; fill: #222; text-anchor: middle; }
.pg-t { font: 700 6px "Liberation Sans", sans-serif; fill: #fff; }
.sk-s { font: 700 38px "Liberation Sans", sans-serif; fill: #fff; text-anchor: middle; }
```
